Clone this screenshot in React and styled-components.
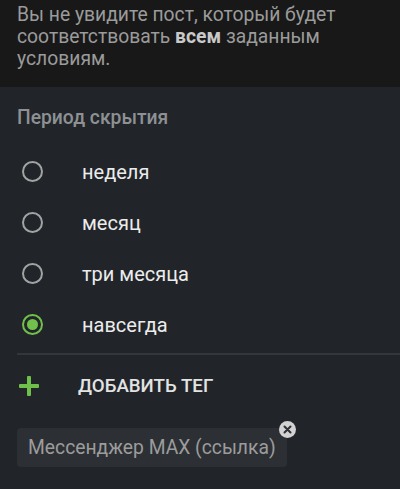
import React from "react";
import styled, { createGlobalStyle } from "styled-components";

const Global = createGlobalStyle`
  html, body {
    margin: 0;
    padding: 0;
    background: #212529;
    font-family: Roboto, "Noto Sans", sans-serif;
  }
  * { box-sizing: border-box; }
`;

const Page = styled.div`
  width: 400px;
  height: 489px;
  overflow: hidden;
  background: #212529;
`;

const Notice = styled.div`
  background: #181818;
  padding: 4px 17px 17px;
  height: 87px;
  font-size: 19.3px;
  line-height: 22px;
  color: #9b9b9b;
`;

const Strong = styled.b`
  font-weight: 700;
  color: #c9c9c9;
`;

const Section = styled.div`
  padding: 19px 0 0 17px;
`;

const Title = styled.div`
  font-size: 19.3px;
  font-weight: 500;
  line-height: 24px;
  color: #8e9194;
  margin-bottom: 16px;
`;

const Option = styled.label`
  display: flex;
  align-items: center;
  height: 51px;
  cursor: pointer;
`;

const Radio = styled.span`
  width: 21px;
  height: 21px;
  margin-left: 5px;
  border-radius: 50%;
  border: 2px solid ${p => (p.checked ? "#72c04c" : "#a3a3a3")};
  display: flex;
  align-items: center;
  justify-content: center;
  &::after {
    content: "";
    display: ${p => (p.checked ? "block" : "none")};
    width: 11px;
    height: 11px;
    border-radius: 50%;
    background: #72c04c;
  }
`;

const OptionText = styled.span`
  margin-left: 39px;
  font-size: 20px;
  color: #ececec;
`;

const Divider = styled.div`
  height: 2px;
  background: #33373b;
  margin-top: 3px;
`;

const AddRow = styled.div`
  display: flex;
  align-items: center;
  height: 62px;
`;

const Plus = styled.span`
  position: relative;
  width: 20px;
  height: 20px;
  margin-left: 2px;
  &::before, &::after {
    content: "";
    position: absolute;
    background: #6fc04b;
    border-radius: 1px;
  }
  &::before { left: 0; right: 0; top: 8.25px; height: 3.5px; }
  &::after { top: 0; bottom: 0; left: 8.25px; width: 3.5px; }
`;

const AddText = styled.span`
  margin-left: 39px;
  font-size: 18.7px;
  font-weight: 500;
  color: #e3e3e3;
`;

const Tags = styled.div`
  padding-top: 11px;
  padding-bottom: 19px;
`;

const Chip = styled.div`
  position: relative;
  display: inline-flex;
  align-items: center;
  height: 39px;
  padding: 0 11px;
  border-radius: 4px;
  background: #2c3034;
  font-size: 19.3px;
  color: #9c9c9c;
`;

const Close = styled.span`
  position: absolute;
  top: -7.5px;
  right: -9.5px;
  width: 17px;
  height: 17px;
  border-radius: 50%;
  background: #d2d2d2;
  display: flex;
  align-items: center;
  justify-content: center;
`;

const options = ["неделя", "месяц", "три месяца", "навсегда"];

export default function App() {
  return (
    <Page>
      <Global />
      <Notice>
        Вы не увидите пост, который будет соответствовать <Strong>всем</Strong> заданным условиям.
      </Notice>
      <Section>
        <Title>Период скрытия</Title>
        {options.map((o, i) => (
          <Option key={o}>
            <Radio checked={i === 3} />
            <OptionText>{o}</OptionText>
          </Option>
        ))}
        <Divider />
        <AddRow>
          <Plus />
          <AddText>ДОБАВИТЬ ТЕГ</AddText>
        </AddRow>
        <Tags>
          <Chip>
            Мессенджер MAX (ссылка)
            <Close>
              <svg width="9" height="9" viewBox="0 0 9 9">
                <path d="M1.5 1.5 L7.5 7.5 M7.5 1.5 L1.5 7.5" stroke="#2c3034" strokeWidth="2" strokeLinecap="round" />
              </svg>
            </Close>
          </Chip>
        </Tags>
        <Divider />
      </Section>
    </Page>
  );
}
